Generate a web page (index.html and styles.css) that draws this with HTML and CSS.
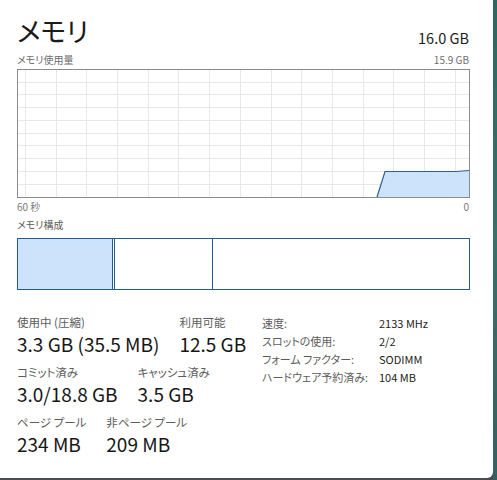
FILE: index.html
```html
<!DOCTYPE html>
<html lang="ja">
<head>
<meta charset="utf-8">
<link rel="stylesheet" href="styles.css">
</head>
<body>
<div class="screen">
  <div class="panel">
    <div class="header">
      <div class="title">メモリ</div>
      <div class="total">16.0 GB</div>
    </div>
    <div class="caption-row">
      <span>メモリ使用量</span>
      <span>15.9 GB</span>
    </div>
    <svg class="graph" width="453" height="129" viewBox="0 0 453 129">
      <g class="grid">
        <line x1="8.5" y1="0" x2="8.5" y2="129"/>
        <line x1="39.5" y1="0" x2="39.5" y2="129"/>
        <line x1="69.5" y1="0" x2="69.5" y2="129"/>
        <line x1="100.5" y1="0" x2="100.5" y2="129"/>
        <line x1="131.5" y1="0" x2="131.5" y2="129"/>
        <line x1="161.5" y1="0" x2="161.5" y2="129"/>
        <line x1="192.5" y1="0" x2="192.5" y2="129"/>
        <line x1="223.5" y1="0" x2="223.5" y2="129"/>
        <line x1="254.5" y1="0" x2="254.5" y2="129"/>
        <line x1="284.5" y1="0" x2="284.5" y2="129"/>
        <line x1="315.5" y1="0" x2="315.5" y2="129"/>
        <line x1="346.5" y1="0" x2="346.5" y2="129"/>
        <line x1="376.5" y1="0" x2="376.5" y2="129"/>
        <line x1="407.5" y1="0" x2="407.5" y2="129"/>
        <line x1="438.5" y1="0" x2="438.5" y2="129"/>
        <line x1="0" y1="13.5" x2="453" y2="13.5"/>
        <line x1="0" y1="25.5" x2="453" y2="25.5"/>
        <line x1="0" y1="38.5" x2="453" y2="38.5"/>
        <line x1="0" y1="51.5" x2="453" y2="51.5"/>
        <line x1="0" y1="64.5" x2="453" y2="64.5"/>
        <line x1="0" y1="76.5" x2="453" y2="76.5"/>
        <line x1="0" y1="89.5" x2="453" y2="89.5"/>
        <line x1="0" y1="102.5" x2="453" y2="102.5"/>
        <line x1="0" y1="115.5" x2="453" y2="115.5"/>
      </g>
      <polygon class="area" points="360,128 368,102.5 439,102.5 452,101.5 452,128"/>
      <polyline class="line" points="360,128 368,102.5 439,102.5 452,101.5"/>
      <rect class="frame" x="0.5" y="0.5" width="452" height="128"/>
    </svg>
    <div class="caption-row axis">
      <span>60 秒</span>
      <span>0</span>
    </div>
    <div class="caption-row comp-label">
      <span>メモリ構成</span>
    </div>
    <div class="composition">
      <div class="seg seg-used"></div>
      <div class="seg seg-mod"></div>
      <div class="seg seg-free"></div>
    </div>
    <div class="stats">
      <div class="stats-left">
        <div class="stat-row">
          <div class="stat"><div class="label">使用中 (圧縮)</div><div class="value">3.3 GB (35.5 MB)</div></div>
          <div class="stat"><div class="label">利用可能</div><div class="value">12.5 GB</div></div>
        </div>
        <div class="stat-row">
          <div class="stat"><div class="label">コミット済み</div><div class="value">3.0/18.8 GB</div></div>
          <div class="stat"><div class="label">キャッシュ済み</div><div class="value">3.5 GB</div></div>
        </div>
        <div class="stat-row">
          <div class="stat"><div class="label">ページ プール</div><div class="value">234 MB</div></div>
          <div class="stat"><div class="label">非ページ プール</div><div class="value">209 MB</div></div>
        </div>
      </div>
      <div class="stats-right">
        <div class="k">速度:</div><div class="v">2133 MHz</div>
        <div class="k">スロットの使用:</div><div class="v">2/2</div>
        <div class="k">フォーム ファクター:</div><div class="v">SODIMM</div>
        <div class="k">ハードウェア予約済み:</div><div class="v">104 MB</div>
      </div>
    </div>
  </div>
  <div class="edge"></div>
</div>
</body>
</html>
```

FILE: styles.css
```css
* { box-sizing: border-box; }
html, body {
  margin: 0;
  padding: 0;
  width: 497px;
  height: 480px;
  overflow: hidden;
  background: #4a4d4f;
}
body {
  font-family: "Noto Sans CJK JP", "Noto Sans", sans-serif;
  font-feature-settings: "palt";
  color: #1b1b1b;
}
.screen {
  display: flex;
  height: 480px;
}
.panel {
  width: 493px;
  height: 478px;
  background: #ffffff;
  border-bottom-right-radius: 6px;
  padding: 0 24px 0 17px;
  display: flex;
  flex-direction: column;
}
.edge {
  flex: 1;
  background: linear-gradient(180deg, #2f6662 0%, #3a6f6b 50%, #355f60 100%);
}
.header {
  display: flex;
  justify-content: space-between;
  align-items: flex-end;
  margin-top: 14px;
  height: 34px;
}
.title {
  font-size: 27px;
  line-height: 34px;
  font-weight: 400;
}
.total {
  font-size: 14.5px;
  line-height: 18px;
  margin-bottom: 1px;
}
.caption-row {
  display: flex;
  justify-content: space-between;
  font-size: 10px;
  line-height: 14px;
  color: #6d6d6d;
  margin-top: 5px;
  height: 16px;
}
.graph {
  display: block;
  margin-top: 0;
}
.grid line {
  stroke: #e8e8e8;
  stroke-width: 1;
}
.area { fill: #cce3fb; stroke: none; }
.line { fill: none; stroke: #2a5f98; stroke-width: 1.2; }
.frame { fill: none; stroke: #8b8b8b; stroke-width: 1; }
.axis { margin-top: 2px; color: #7a7a7a; }
.comp-label { margin-top: 2px; color: #5a5a5a; }
.composition {
  display: flex;
  height: 52px;
  margin-top: 4px;
  border: 1px solid #245a92;
  width: 453px;
}
.seg { height: 100%; }
.seg-used { width: 95px; background: #cce3fb; border-right: 1px solid #245a92; }
.seg-mod { width: 99px; margin-left: 1px; border-left: 1px solid #245a92; border-right: 1px solid #245a92; }
.seg-free { flex: 1; }
.stats {
  display: flex;
  margin-top: 24px;
}
.stats-left {
  width: 245px;
  display: flex;
  flex-direction: column;
  gap: 7px;
}
.stat-row {
  display: flex;
  gap: 20px;
}
.label {
  font-size: 11.5px;
  line-height: 16px;
  color: #5c5c5c;
}
.value {
  font-size: 19px;
  line-height: 27px;
  color: #161616;
}
.stats-right {
  display: grid;
  grid-template-columns: 117px auto;
  grid-auto-rows: 18px;
  font-size: 11px;
  line-height: 18px;
  align-content: start;
}
.k { color: #5c5c5c; }
.v { color: #222; }
```
